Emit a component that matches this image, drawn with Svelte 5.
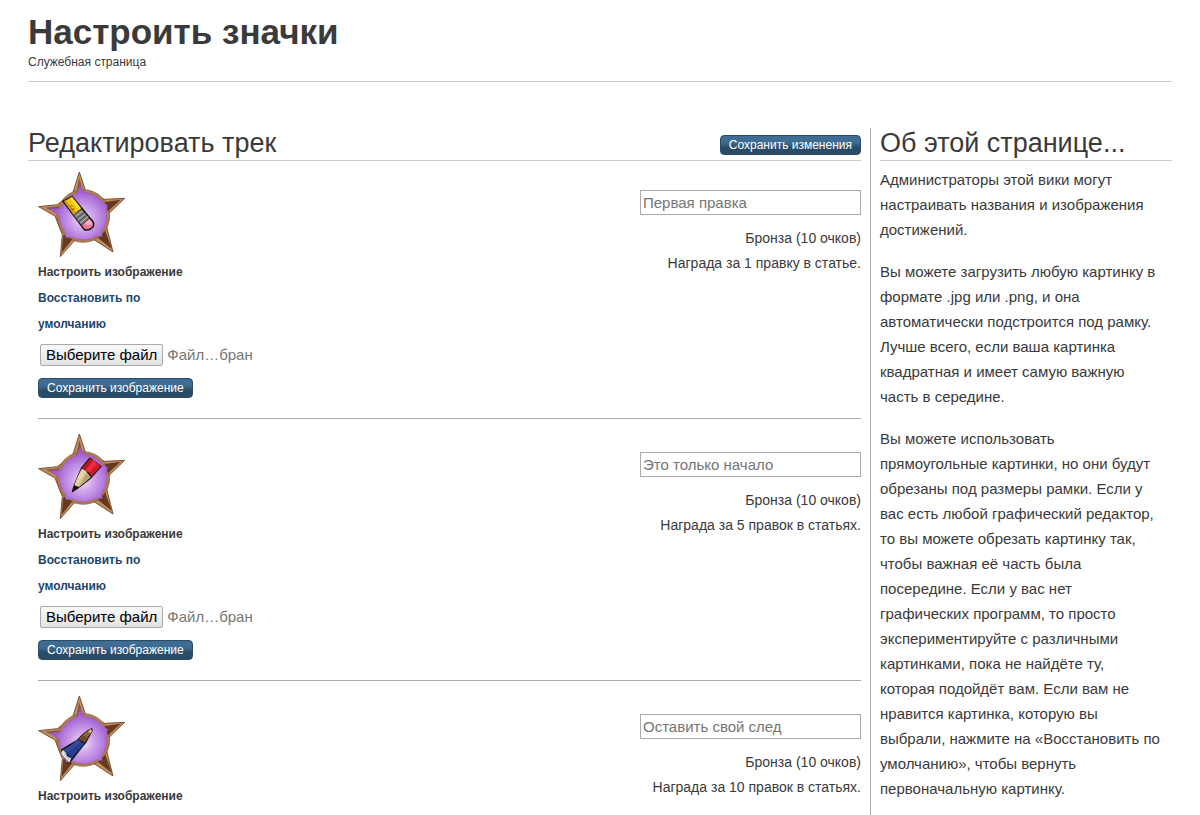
<script lang="ts">
  type Tool = 'eraser' | 'pencil' | 'pen';

  interface Badge {
    tool: Tool;
    name: string;
    level: string;
    reward: string;
    expanded: boolean;
  }

  const badges: Badge[] = [
    {
      tool: 'eraser',
      name: 'Первая правка',
      level: 'Бронза (10 очков)',
      reward: 'Награда за 1 правку в статье.',
      expanded: true,
    },
    {
      tool: 'pencil',
      name: 'Это только начало',
      level: 'Бронза (10 очков)',
      reward: 'Награда за 5 правок в статьях.',
      expanded: true,
    },
    {
      tool: 'pen',
      name: 'Оставить свой след',
      level: 'Бронза (10 очков)',
      reward: 'Награда за 10 правок в статьях.',
      expanded: false,
    },
  ];

  const about = [
    'Администраторы этой вики могут настраивать названия и изображения достижений.',
    'Вы можете загрузить любую картинку в формате .jpg или .png, и она автоматически подстроится под рамку. Лучше всего, если ваша картинка квадратная и имеет самую важную часть в середине.',
    'Вы можете использовать прямоугольные картинки, но они будут обрезаны под размеры рамки. Если у вас есть любой графический редактор, то вы можете обрезать картинку так, чтобы важная её часть была посередине. Если у вас нет графических программ, то просто экспериментируйте с различными картинками, пока не найдёте ту, которая подойдёт вам. Если вам не нравится картинка, которую вы выбрали, нажмите на «Восстановить по умолчанию», чтобы вернуть первоначальную картинку.',
  ];
</script>

{#snippet star(tool: Tool)}
  <svg class="star" viewBox="24 17 264 264" aria-hidden="true">
    <defs>
      <radialGradient id="glow-{tool}" gradientUnits="userSpaceOnUse" cx="158" cy="160" r="82">
        <stop offset="0" stop-color="#f1e2fa" />
        <stop offset="0.4" stop-color="#d0a5eb" />
        <stop offset="1" stop-color="#a05dd3" />
      </radialGradient>
    </defs>
    <!-- spikes -->
    <path
      d="M148 20 L168 80 L224 102 L284 99 L236 145 L230 185 L249 260 L192 223 L133 226 L91 274 L97 208 L75 152 L26 124 L82 118 L128 84 Z"
      fill="#c08d60" stroke="#7d5233" stroke-width="3" stroke-linejoin="round"
    />
    <circle cx="160" cy="152" r="79" fill="#b07c57" stroke="#7d5033" stroke-width="2" />
    <path d="M148 38 L160 86 L138 88 Z M46 127 L88 123 L84 144 Z" fill="#86534a" />
    <path d="M272 103 L224 110 L234 138 Z M245 250 L204 218 L226 196 Z M95 262 L100 208 L127 222 Z" fill="#64391f" />
    <path
      d="M150 58 L160 81 Q196 82 220 113 L233 119 L229 137 Q235 172 215 198 L217 214 L199 212 Q165 233 125 215 L108 218 L105 199 Q87 177 88 151 L58 130 L92 129 Q108 95 140 84 Z"
      fill="url(#glow-{tool})" stroke="#7f5277" stroke-width="1"
    />

    {#if tool === 'eraser'}
      <path d="M96 107 L127 91 L192 169 Q197 183 184 192 Q171 200 161 194 Z" fill="#111" />
      <path d="M102 108 L126 95 L153 129 L131 148 Z" fill="#f2c413" />
      <path d="M102 108 L108 105 L138 143 L131 148 Z" fill="#d69d08" />
      <path d="M119 99 L126 95 L153 129 L147 134 Z" fill="#ffdf3c" />
      <path d="M119 124 l7 -4 l4 4 M122 129 l5 3 l6 -4 M125 134 l8 -3" fill="none" stroke="#6b5410" stroke-width="2" />
      <path d="M131 149 L154 131 L178 158 L154 179 Z" fill="#777" />
      <path d="M136 155 L158 137 M143 164 L166 146 M150 173 L174 154" stroke="#bababa" stroke-width="3" />
      <path d="M139 159 L162 142 M147 168 L170 150" stroke="#444" stroke-width="2" />
      <path d="M155 180 L178 160 L188 172 Q192 181 182 188 Q171 195 164 190 Z" fill="#f1799d" />
      <path d="M164 173 L178 161 L186 171 Q184 178 174 182 Z" fill="#ffacc4" />
    {:else if tool === 'pencil'}
      <path d="M179 90 L216 117 L184 153 Q153 180 125 196 Q128 176 153 121 Z" fill="#1a1013" />
      <path d="M181 93 L193 100 L169 132 L157 121 Z" fill="#b81525" />
      <path d="M190 97 L203 109 L181 139 L167 129 Z" fill="#ec2d3b" />
      <path d="M202 107 L213 116 L184 148 L179 137 Z" fill="#c91c2e" />
      <path d="M156 124 L168 132 L182 150 Q160 169 145 180 L134 174 Q140 151 156 124 Z" fill="#d9c291" />
      <path d="M156 124 L168 132 L139 177 L134 174 Q140 151 156 124 Z" fill="#e6d4a8" />
      <path d="M170 136 L182 150 Q161 168 146 180 Z" fill="#b8a27a" />
      <path d="M132 174 L148 180 L126 195 Z" fill="#111" />
    {:else}
      <path d="M185 116 Q190 119 186 128 L169 160 Q151 181 118 224 L92 181 Q118 164 141 151 Q162 127 185 116 Z" fill="#111" />
      <path d="M183 119 L185 127 L165 160 L145 149 Q164 128 183 119 Z" fill="#70482c" />
      <path d="M181 121 L184 128 L171 144 L158 137 Z" fill="#936641" />
      <path d="M182 119 L186 124 L181 132 L175 127 Z" fill="#e4cb77" />
      <path d="M143 151 L164 163 Q142 186 125 207 L100 181 Q124 169 143 151 Z" fill="#283d8d" />
      <path d="M143 151 L152 156 Q132 177 112 190 L100 181 Q124 169 143 151 Z" fill="#344c9f" />
      <path d="M98 181 L108 190 L112 201 L124 207 L118 220 L94 194 Z" fill="#d9e3ee" />
      <path d="M104 190 L117 211" stroke="#91a6bd" stroke-width="3" />
    {/if}
  </svg>
{/snippet}

<div class="page">
  <header class="page-header">
    <h1>Настроить значки</h1>
    <p>Служебная страница</p>
  </header>

  <div class="columns">
    <main>
      <div class="section-head">
        <h2>Редактировать трек</h2>
        <button type="button" class="button button-save">Сохранить изменения</button>
      </div>

      <ul class="badges">
        {#each badges as badge}
          <li class="badge">
            <form class="picture">
              {@render star(badge.tool)}
              <span class="caption">Настроить изображение</span>
              {#if badge.expanded}
                <a class="revert" href="#revert">Восстановить по умолчанию</a>
                <label class="file">
                  <input type="file" accept=".jpg,.png" />
                  <span class="file-button">Выберите файл</span>
                  <span class="file-name">Файл…бран</span>
                </label>
                <button type="button" class="button">Сохранить изображение</button>
              {/if}
            </form>
            <div class="details">
              <input type="text" placeholder={badge.name} aria-label="Название значка" />
              <p>{badge.level}</p>
              <p>{badge.reward}</p>
            </div>
          </li>
        {/each}
      </ul>
    </main>

    <aside>
      <h2>Об этой странице...</h2>
      {#each about as paragraph}
        <p>{paragraph}</p>
      {/each}
    </aside>
  </div>
</div>

<style>
  :global(body) {
    margin: 0;
    background: #fff;
  }

  .page {
    box-sizing: border-box;
    display: flex;
    flex-direction: column;
    min-height: 100vh;
    padding: 11px 28px 0;
    color: #3a3a3a;
    font-family: "Liberation Sans", Arial, sans-serif;
    font-size: 14px;
    line-height: 25px;
  }

  h1,
  h2,
  p {
    margin: 0;
  }

  .page-header {
    padding-bottom: 10px;
    border-bottom: 1px solid #ccc;
  }

  h1 {
    font-size: 35px;
    line-height: 42px;
  }

  .page-header p {
    font-size: 12px;
    line-height: 18px;
  }

  .columns {
    display: flex;
    flex: 1;
    margin-top: 46px;
  }

  main {
    flex: 1;
    min-width: 0;
    margin-right: 9px;
  }

  h2 {
    padding-bottom: 2px;
    font-size: 27px;
    font-weight: normal;
    line-height: 30px;
  }

  .section-head {
    display: flex;
    align-items: flex-end;
    justify-content: space-between;
    border-bottom: 1px solid #ccc;
  }

  .button {
    height: 20px;
    padding: 0 8px;
    border: 1px solid #2a4c68;
    border-radius: 4px;
    background: linear-gradient(#3f6c93 35%, #2b4c66 65%);
    color: #fff;
    font-family: inherit;
    font-size: 12px;
    line-height: 18px;
    cursor: pointer;
  }

  .button-save {
    margin-bottom: 5px;
  }

  .badges {
    margin: 0 0 0 10px;
    padding: 0;
    list-style: none;
  }

  .badge {
    display: flex;
    justify-content: space-between;
    padding-top: 10px;
  }

  .badge:not(:last-child) {
    padding-bottom: 20px;
    border-bottom: 1px solid #aaa;
  }

  .badge + .badge {
    padding-top: 14px;
  }

  .picture {
    display: flex;
    flex-direction: column;
    align-items: flex-start;
  }

  .star {
    display: block;
    width: 88px;
    height: 88px;
  }

  .caption,
  .revert {
    font-size: 12px;
    font-weight: bold;
    line-height: 26px;
  }

  .revert {
    width: 150px;
    color: #1f466d;
    text-decoration: none;
  }

  .file {
    display: flex;
    align-items: center;
    gap: 4px;
    margin: 7px 0 12px 2px;
    font-size: 15px;
    line-height: 20px;
  }

  .file input {
    position: absolute;
    width: 1px;
    height: 1px;
    opacity: 0;
  }

  .file-button {
    padding: 0 5px;
    border: 1px solid #aaa;
    border-radius: 2px;
    background: linear-gradient(#fafafa, #e2e2e2);
    color: #000;
  }

  .file-name {
    color: #777;
  }

  .details {
    width: 221px;
    padding-top: 19px;
    text-align: right;
  }

  .details input {
    box-sizing: border-box;
    display: block;
    width: 100%;
    height: 25px;
    margin-bottom: 11px;
    padding: 0 2px;
    border: 1px solid #aaa;
    color: #3a3a3a;
    font-family: inherit;
    font-size: 15px;
  }

  .details input::placeholder {
    color: #757575;
    opacity: 1;
  }

  aside {
    width: 292px;
    padding-left: 9px;
    border-left: 1px solid #aaa;
    font-size: 15px;
  }

  aside h2 {
    margin-bottom: 6px;
    border-bottom: 1px solid #ccc;
  }

  aside p {
    padding-right: 10px;
  }

  aside p + p {
    margin-top: 17px;
  }
</style>
